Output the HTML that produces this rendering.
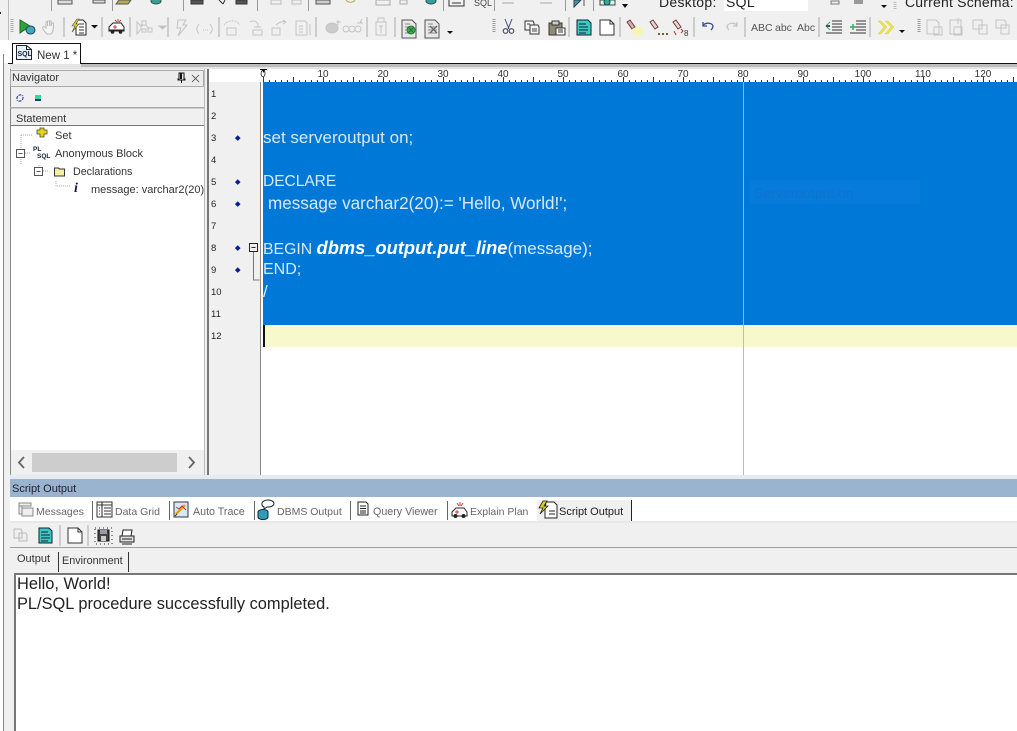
<!DOCTYPE html>
<html><head><meta charset="utf-8"><style>
html,body{margin:0;padding:0}
body{width:1017px;height:731px;position:relative;overflow:hidden;background:#f0f0f0;font-family:"Liberation Sans",sans-serif;color:#222}
.a{position:absolute}
.t{position:absolute;white-space:nowrap;font-size:11px;line-height:14px}
.g{color:#666}
.e{position:absolute;white-space:nowrap;font-size:17px;line-height:22px;color:#d8e9fb;left:263px}
.n{position:absolute;left:211px;font-size:9.500px;line-height:12px;color:#222}
.d{position:absolute;left:235.500px;width:3.500px;height:3.500px;background:#0a1f8f;transform:rotate(45deg)}
.r{position:absolute;top:70px;font-size:10px;line-height:10px;color:#333;transform:translateX(-50%)}
.s{position:absolute;width:1px;background:#999}
svg{position:absolute;overflow:visible}
</style></head><body>
<!-- top toolbars -->
<div class="a" style="left:0;top:0;width:1017px;height:40px;background:#f0f0f0"></div>
<div class="a" style="left:0;top:40px;width:1017px;height:23px;background:#fff"></div>
<div class="a" style="left:8px;top:0;width:1px;height:40px;background:#bbb"></div>
<div class="a" style="left:0;top:12px;width:1px;height:2px;background:#222"></div>
<div class="s" style="left:51px;top:0;height:11px"></div><div class="s" style="left:112px;top:0;height:11px"></div><div class="s" style="left:183px;top:0;height:11px"></div><div class="s" style="left:257px;top:0;height:11px"></div><div class="s" style="left:308px;top:0;height:11px"></div><div class="s" style="left:443px;top:0;height:11px"></div><div class="s" style="left:494px;top:0;height:11px"></div><div class="s" style="left:565px;top:0;height:11px"></div><div class="s" style="left:593px;top:0;height:11px"></div>
<svg style="left:0;top:0" width="1017" height="40" fill="none" stroke-width="1">
<!-- row 1 cropped icons -->
<path d="M58 0h14v4h-14zM93 0h12v3h-12z" stroke="#555" fill="#ddd"/>
<path d="M119 0h12l-3 4h-12z" fill="#b5aa58" stroke="#555"/>
<ellipse cx="156" cy="1" rx="5" ry="3" fill="#3f9c94" stroke="#255"/>
<path d="M191 0h12v4h-12zM219 0l4 4M225 0l-2 4M236 0h11v4h-11z" fill="#555" stroke="#333"/>
<path d="M271 0h10v4h-10zM292 0h9v4h-9z" stroke="#bbb"/>
<path d="M316 0h14v4h-14z" fill="#ccc" stroke="#555"/>
<path d="M346 0a5 4 0 0 0 9 0" stroke="#b8a94a"/><path d="M376 0h14v5h-14zM400 0h7v4h-7z" stroke="#aaa"/>
<ellipse cx="431" cy="1" rx="5" ry="3" fill="#3f9c94" stroke="#255"/>
<path d="M449 0v6h15v-6M452 3h9" stroke="#333"/>
<path d="M502 3h12M540 3h12" stroke="#ccc" stroke-width="2"/>
<path d="M574 0v7l7-7z" fill="#4c9a94" stroke="#245"/><path d="M584 0v6" stroke="#555"/>
<path d="M600 0h15v5h-15z" stroke="#444" fill="#cfe"/><circle cx="607" cy="2" r="3" fill="#3a9" stroke="#244"/>
<path d="M622 4h6l-3 4z" fill="#111"/>
<path d="M831 1h8v3h-8z" stroke="#777"/><path d="M854 0h9v4h-9z" fill="#999"/><path d="M881 5h6l-3 3z" fill="#111"/>
<path d="M895 2v7" stroke="#bbb" stroke-width="3" stroke-dasharray="1 1"/>
<!-- row 2 separators -->
<path d="M12 19v14" stroke="#aaa" stroke-dasharray="1 1" stroke-width="3"/>
<path d="M64 17v20M102 17v20M130 17v20M168 17v20M219 17v20M316 17v20M367 17v20M395 17v20M569 17v20M620 17v20M694 17v20M745 17v20M819 17v20M870 17v20" stroke="#aaa"/>
<path d="M494 19v14M919 19v14" stroke="#999" stroke-width="3" stroke-dasharray="1 1"/>
<!-- run -->
<path d="M20 20v13l10-7z" fill="#31a13c" stroke="#1c6b28"/>
<ellipse cx="30.500" cy="30" rx="4.500" ry="4" fill="#3fa7b5" stroke="#246"/>
<path d="M47 34c-3-3-5-6-4-7s2 0 3 1v-6h1.500v4-5h2v5-5h1.500v5l1-3h1.500c0 4 0 8-2 11z" fill="#f4f4f4" stroke="#bbb"/>
<!-- script -->
<path d="M77 20h6l3 3v12h-10v-7z" fill="#fff" stroke="#222"/><path d="M79 24h5M79 27h5M79 30h5M79 33h5" stroke="#333"/><path d="M77 19l-5 7h3l-3 6 7-8h-3l3-5z" fill="#d9d023" stroke="#555" stroke-width=".6"/>
<path d="M91 25h7l-3.500 3.500z" fill="#111"/>
<!-- ambulance -->
<path d="M109 27l4-4h8l3 4v4h-15z" fill="#fff" stroke="#222"/><path d="M109 30h15" stroke="#222"/><circle cx="112.500" cy="32" r="1.800" fill="#222"/><circle cx="120.500" cy="32" r="1.800" fill="#222"/><path d="M118 19v3M115 20l2 2M121 20l-2 2" stroke="#d34"/><path d="M113 27h4M115 25v4" stroke="#d34"/>
<!-- disabled greys -->
<g stroke="#c4c4c4" fill="#f0f0f0">
<path d="M137 22v12l4-5v-3zM142 21h4v4h-4zM148 28h4v4h-4zM142 32h4v-3h-4zM141 25l2 1M146 25l3 4"/>
<path d="M159 26h7l-3.500 3z" fill="#bbb"/>
<path d="M178 20h8l-3 5h4l-9 11 3-8h-4z"/>
<path d="M199 24c-3 4-3 6 0 10M210 24c3 4 3 6 0 10" fill="none"/><path d="M203 30h1M205 30h1M207 30h1"/>
<path d="M227 28h9v7h-9z" fill="none"/><path d="M224 25c3-5 12-6 16 0" fill="none" stroke-dasharray="2 1"/>
<path d="M250 22c3-2 6-1 8 2v3M253 30h9v5h-9zM254 27h7" fill="none"/>
<path d="M272 28h8v7h-8zM276 25c3-3 7-4 10-3M283 20l3 2-3 2" fill="none"/>
<path d="M296 21h9l2 2v12h-11zM299 26h4M299 29h4M299 32h4M310 24v11" fill="#f0f0f0"/>
<ellipse cx="332" cy="28" rx="6" ry="5" fill="#ccc"/><path d="M338 20v5M336 22h5"/>
<circle cx="346" cy="29" r="3" fill="none"/><circle cx="352" cy="29" r="3" fill="none"/><circle cx="358" cy="29" r="3" fill="none"/><path d="M357 23h5l-2-2M362 19l-2 4"/>
<path d="M376 22h10v13h-10zM378 18h6v4h-6zM379 26h4M381 26v7" fill="#f0f0f0"/>
</g>
<!-- doc xml green -->
<path d="M402 20h10l4 4v14h-14z" fill="#e8e8e8" stroke="#555"/><path d="M405 24h5M405 27h9M405 30h9M405 33h9" stroke="#888"/><circle cx="411" cy="30" r="4" fill="#43b648" stroke="#2b7c30"/><path d="M408 27l6 6M414 27l-6 6" stroke="#264"/>
<path d="M425 20h10l4 4v14h-14z" fill="#e8e8e8" stroke="#555"/><path d="M428 24h5M428 27h9M428 30h9M428 33h9" stroke="#888"/><path d="M430 26l7 7M437 26l-7 7" stroke="#666" stroke-width="1.300"/>
<path d="M447 31h6l-3 3z" fill="#111"/>
<!-- cut copy paste -->
<path d="M505 19l4 10M512 19l-4 10" stroke="#444a88" stroke-width="1"/><circle cx="505.500" cy="31" r="2.300" stroke="#445" stroke-width="1.100"/><circle cx="511.500" cy="31" r="2.300" stroke="#445" stroke-width="1.100"/>
<path d="M525 21h8l1 2v7h-9z" fill="#f4f4f4" stroke="#333"/><path d="M530 25h8l1 2v7h-9z" fill="#f4f4f4" stroke="#333"/><path d="M527 24h3M532 29h5M532 31h5" stroke="#444"/>
<path d="M549 23h13v12h-13z" fill="#8f8b70" stroke="#333"/><path d="M552 21h7v4h-7z" fill="#ccc" stroke="#333"/><path d="M556 28h9v7h-9z" fill="#fff" stroke="#333"/><path d="M558 30h5M558 32h5" stroke="#333"/>
<!-- teal doc, blank -->
<path d="M577 20h11l3 3v12h-14z" fill="#3bc9c2" stroke="#123"/><path d="M579 24h7M579 27h9M579 30h9M579 33h7" stroke="#123"/>
<path d="M600 20h10l4 4v11h-14z" fill="#fff" stroke="#333"/><path d="M610 20v4h4" stroke="#333"/>
<!-- highlighters -->
<path d="M627 22l3-2 5 7-3 2z" fill="#c9b5b5" stroke="#7a3535"/><path d="M632 29l6-3 5 2v7h-9z" fill="#f6f5b5"/>
<path d="M650 22l3-2 5 7-3 2z" fill="#e0d8d8" stroke="#7a3535"/><path d="M658 33h2v2h-2zM662 33h2v2h-2zM666 33h2v2h-2z" fill="#6b6320"/>
<path d="M673 22l3-2 5 7-3 2z" fill="#e0d8d8" stroke="#7a3535"/><path d="M674 31l2 4M681 29l2 2-2 2" stroke="#b33"/><text x="684" y="36" font-family="Liberation Sans" font-size="8" fill="#333">8</text>
<!-- undo/redo -->
<path d="M703 25c4-3 9-2 10 1 0 2-1 3-2 4M703 22v4h4" stroke="#3a4a99" stroke-width="1.300"/>
<path d="M737 25c-4-3-8-2-10 1 0 2 1 3 2 4M737 22v4h-4" stroke="#c4c4c4" stroke-width="1.300"/>
<!-- indent -->
<path d="M832 21h10M832 24h10M832 27h10M832 30h10M826 33h16" stroke="#333"/><path d="M830 22l-4 4 4 4" stroke="#3a6"/><path d="M826 26h4" stroke="#357" stroke-width="2"/>
<path d="M856 21h10M856 24h10M856 27h10M856 30h10M850 33h16" stroke="#333"/><path d="M850 27h6M853 24v6" stroke="#3a6" stroke-width="1.500"/>
<!-- chevrons -->
<path d="M878 21l6 6-6 7 3 0 6-7-6-6zM885 21l6 6-6 7 3 0 6-7-6-6z" fill="#eae34a" stroke="#d5cf52" stroke-width=".5"/>
<path d="M899 30h6l-3 3z" fill="#111"/>
<!-- right grey -->
<g stroke="#c4c4c4" fill="#f0f0f0">
<path d="M927 20h9l3 3v11h-12zM934 27h8v8h-8z"/><path d="M950 20h11v14h-11zM954 27h8v8h-8zM958 18v6"/><path d="M973 20h9v9h-9zM979 25h8v9h-8z"/><path d="M996 20h8l2 2v6h-10zM1001 25h8v9h-8z"/>
</g>
</svg>
<div class="t" style="left:659px;top:-6px;font-size:14px;line-height:16px;letter-spacing:.3px">Desktop:</div>
<div class="a" style="left:724px;top:0;width:84px;height:11px;background:#fff"></div>
<div class="t" style="left:726px;top:-6px;font-size:14px;line-height:16px;letter-spacing:.3px">SQL</div>
<div class="t" style="left:905px;top:-6px;font-size:14px;line-height:16px;letter-spacing:.2px">Current Schema:</div>
<div class="t" style="left:474px;top:-3px;font-size:9px;line-height:12px;color:#444">SQL</div>
<div class="t" style="left:751px;top:21px;font-size:10.500px;color:#555">ABC</div>
<div class="t" style="left:775px;top:21px;font-size:10.500px;color:#555">abc</div>
<div class="t" style="left:797px;top:21px;font-size:10.500px;color:#555">Abc</div>
<!-- tab strip -->
<div class="a" style="left:3px;top:54px;width:1px;height:677px;background:#888"></div>
<div class="a" style="left:0;top:54px;width:3px;height:677px;background:#fff"></div>
<div class="a" style="left:4px;top:64px;width:6px;height:667px;background:#f0f0f0"></div>
<div class="a" style="left:12px;top:43px;width:69px;height:21px;background:#fff;border:1px solid #111;border-bottom:none;box-sizing:border-box"></div>
<div class="a" style="left:81px;top:63px;width:936px;height:1px;background:#111"></div>
<div class="a" style="left:8px;top:63px;width:4px;height:1px;background:#111"></div>
<div class="a" style="left:10px;top:64px;width:1007px;height:5px;background:#e4e4e4"></div>
<div class="a" style="left:81px;top:64px;width:936px;height:3px;background:#bdbdbd"></div>
<svg style="left:16px;top:45px" width="17" height="16" fill="none"><path d="M.500.500h10l5 4v10h-15z" fill="#e7f0fa" stroke="#222"/><path d="M10.500.500v4h5" stroke="#222"/></svg>
<div class="t" style="left:17.500px;top:50px;font-size:7px;line-height:9px;font-weight:bold;color:#123">SQL</div>
<div class="t" style="left:37px;top:49px;font-size:11.500px;color:#333">New 1 *</div>
<!-- navigator -->
<div class="a" style="left:10px;top:69px;width:195px;height:406px;background:#f0f0f0;box-sizing:border-box;border:1px solid #bbb;border-left:1px solid #888;border-top:none"></div>
<div class="a" style="left:10px;top:70px;width:194px;height:17px;background:#ececec;box-sizing:border-box;border:1px solid #aaa;border-radius:1px"></div>
<div class="t" style="left:12px;top:71px;font-size:11px;color:#333">Navigator</div>
<svg style="left:176px;top:72px" width="26" height="13" fill="none"><path d="M3 1h5v6h1v1h-7v-1h1zM5.500 8v3" stroke="#111"/><path d="M4 1h2v6h-2z" fill="#111"/><path d="M16 3l7 7M23 3l-7 7" stroke="#444" stroke-width=".8"/></svg>
<svg style="left:15px;top:92px" width="30" height="12" fill="none"><path d="M2 7a3.500 3.500 0 0 1 6-3M8 5a3.500 3.500 0 0 1-6 3" stroke="#2430a8" stroke-width="1.100" stroke-dasharray="3 1"/><path d="M20 3h6v4h-6z" fill="#3bd6a8"/><path d="M20 7h6v2h-6z" fill="#146"/></svg>
<div class="a" style="left:10px;top:107px;width:194px;height:1px;background:#aaa"></div>
<div class="a" style="left:11px;top:108px;width:193px;height:17px;background:#f0f0f0;border-top:1px solid #ccc;box-sizing:border-box"></div>
<div class="a" style="left:11px;top:125px;width:193px;height:325px;background:#fff;border-top:1px solid #777;box-sizing:border-box"></div>
<div class="t" style="left:16px;top:112px;font-size:11px;color:#333">Statement</div>
<svg style="left:14px;top:127px" width="190" height="70" fill="none">
<path d="M7 8v14M7 8h12M7 37v-7M25 38v2M11 26h6M29 44h6M42 54v5h15" stroke="#aaa" stroke-dasharray="1 1"/>
<path d="M23 3h3v-2h4v2h3v4h-3v3h-4v-3h-3z" fill="#e8d718" stroke="#444" stroke-width=".8"/>
<path d="M2.500 22.500h8v8h-8zM4.500 26.500h4" stroke="#555"/>
<path d="M20.500 40.500h8v8h-8zM22.500 44.500h4" stroke="#555"/>
<path d="M40.500 41h4l1 1h5v7h-10z" fill="#f4f09e" stroke="#333"/>
</svg>
<div class="t" style="left:33px;top:146px;font-size:6.500px;line-height:7px;font-weight:bold;color:#123">PL</div>
<div class="t" style="left:37px;top:153px;font-size:6.500px;line-height:7px;font-weight:bold;color:#123">SQL</div>
<div class="t" style="left:55px;top:129px;color:#333">Set</div>
<div class="t" style="left:55px;top:147px;font-size:11px;color:#333">Anonymous Block</div>
<div class="t" style="left:73px;top:165px;font-size:10.700px;color:#333">Declarations</div>
<div class="t" style="left:74px;top:182px;font-size:14px;font-weight:bold;font-style:italic;color:#14145e;font-family:'Liberation Serif',serif">i</div>
<div class="t" style="left:91px;top:183px;width:113px;overflow:hidden;font-size:11px;color:#333">message: varchar2(20)</div>
<div class="a" style="left:11px;top:450px;width:193px;height:25px;background:#f0f0f0"></div>
<div class="a" style="left:32px;top:453px;width:145px;height:19px;background:#cdcdcd"></div>
<svg style="left:16px;top:456px" width="180" height="13" fill="none"><path d="M8 1l-5 5.500 5 5.500" stroke="#666" stroke-width="1.800"/><path d="M173 1l5 5.500-5 5.500" stroke="#666" stroke-width="1.800"/></svg>
<!-- editor -->
<div class="a" style="left:207px;top:69px;width:2px;height:406px;background:#777"></div>
<div class="a" style="left:209px;top:69px;width:808px;height:13px;background:#fff"></div>
<div class="a" style="left:209px;top:82px;width:51px;height:393px;background:#f0f0f0"></div>
<div class="a" style="left:260px;top:82px;width:1px;height:393px;background:#888"></div>
<div class="a" style="left:261px;top:82px;width:756px;height:393px;background:#fff"></div>
<div class="a" style="left:263px;top:82px;width:754px;height:243px;background:#0078d7"></div>
<div class="a" style="left:263px;top:325px;width:754px;height:22px;background:#f7f9cd"></div>
<div class="a" style="left:743px;top:82px;width:1px;height:243px;background:#7dbdf0"></div>
<div class="a" style="left:743px;top:325px;width:1px;height:150px;background:#bbb"></div>
<div class="a" style="left:263px;top:325px;width:2px;height:22px;background:#111"></div>
<div class="a" style="left:750px;top:180px;width:170px;height:24px;background:#067bdb"></div>
<div class="t" style="left:754px;top:186px;font-size:14px;color:#1272c8">Serveroutput on</div>
<!-- ruler -->
<div class="r" style="left:263px">0</div><div class="r" style="left:323px">10</div><div class="r" style="left:383px">20</div><div class="r" style="left:443px">30</div><div class="r" style="left:503px">40</div><div class="r" style="left:563px">50</div><div class="r" style="left:623px">60</div><div class="r" style="left:683px">70</div><div class="r" style="left:743px">80</div><div class="r" style="left:803px">90</div><div class="r" style="left:863px">100</div><div class="r" style="left:923px">110</div><div class="r" style="left:983px">120</div>
<div class="a" style="left:263px;top:80px;width:754px;height:2px;background:repeating-linear-gradient(90deg,#333 0 1px,transparent 1px 6px)"></div>
<div class="a" style="left:263px;top:77px;width:754px;height:5px;background:repeating-linear-gradient(90deg,#333 0 1px,transparent 1px 30px)"></div>
<svg style="left:260px;top:68px" width="7" height="6"><path d="M0 1h7v1h-7zM2 2h3l-1.500 3z" fill="#111"/></svg>
<!-- line numbers -->
<div class="n" style="top:89px">1</div><div class="n" style="top:111px">2</div><div class="n" style="top:133px">3</div><div class="n" style="top:155px">4</div><div class="n" style="top:177px">5</div><div class="n" style="top:199px">6</div><div class="n" style="top:221px">7</div><div class="n" style="top:243px">8</div><div class="n" style="top:265px">9</div><div class="n" style="top:287px">10</div><div class="n" style="top:309px">11</div><div class="n" style="top:331px">12</div>
<div class="d" style="top:136px"></div><div class="d" style="top:180px"></div><div class="d" style="top:202px"></div><div class="d" style="top:246px"></div><div class="d" style="top:268px"></div>
<svg style="left:249px;top:243px" width="16" height="40" fill="none"><path d="M.500.500h8v8h-8zM2.500 4.500h4" stroke="#222"/><path d="M4.500 9v28h6" stroke="#777"/></svg>
<!-- code -->
<div class="e" style="top:127px">set serveroutput on;</div>
<div class="e" style="top:171px;font-size:15.500px">DECLARE</div>
<div class="e" style="top:193px;left:268px;font-size:17.100px">message varchar2(20):= 'Hello, World!';</div>
<div class="e" style="top:237px;font-size:17px"><span style="font-size:15.800px">BEGIN </span><b style="font-style:italic;color:#fff;font-size:18.300px">dbms_output.put_line</b>(message);</div>
<div class="e" style="top:259px;font-size:16px">END;</div>
<div class="e" style="top:281px">/</div>
<!-- bottom panel -->
<div class="a" style="left:10px;top:475px;width:1007px;height:4px;background:#e6ebf0"></div>
<div class="a" style="left:10px;top:479px;width:1007px;height:18px;background:#9ab3cf"></div>
<div class="t" style="left:12px;top:482px;font-size:11px;color:#223">Script Output</div>
<div class="a" style="left:10px;top:497px;width:1007px;height:26px;background:#fff"></div>
<div class="a" style="left:10px;top:521px;width:1007px;height:2px;background:#e8e8e8"></div>
<div class="a" style="left:537px;top:500px;width:95px;height:21px;background:#f0f0f0;border-right:1px solid #222;box-sizing:border-box"></div>
<div class="s" style="left:92px;top:501px;height:19px;background:#666"></div><div class="s" style="left:169px;top:501px;height:19px;background:#666"></div><div class="s" style="left:254px;top:501px;height:19px;background:#666"></div><div class="s" style="left:350px;top:501px;height:19px;background:#666"></div><div class="s" style="left:447px;top:501px;height:19px;background:#666"></div>
<svg style="left:0;top:497px" width="640" height="26" fill="none">
<path d="M19 6h12v3h-12zM19 9h3v8h-3zM22 11h11v8h-11z" fill="#eee" stroke="#888"/>
<path d="M97 5h15v15h-15z" fill="#fff" stroke="#333"/><path d="M97 8h15M102 5v15M100 11h-1M100 14h-1M100 17h-1M104 11h7M104 14h7M104 17h7" stroke="#333" stroke-width="1.100"/>
<path d="M174 5h14v15h-14z" fill="#d8e8f5" stroke="#334"/><path d="M176 17l9-9" stroke="#d9a41e" stroke-width="2.500"/><path d="M176 10l3 2 3-3 4 4" stroke="#c33"/><path d="M175 19l2-2" stroke="#333"/>
<ellipse cx="263" cy="15" rx="5" ry="2.500" fill="#2f9db5" stroke="#123"/><path d="M258 15v5a5 2.500 0 0 0 10 0v-5" fill="#2f9db5" stroke="#123"/><path d="M262 7a6 3.500 0 1 1 5 3l-3 2v-2a6 3.500 0 0 1-2-3z" fill="#fff" stroke="#123"/>
<path d="M358 5h8l2 2v11h-10z" fill="#fff" stroke="#222"/><path d="M360 9h6M360 11.500h6M360 14h6M360 16h6" stroke="#222"/>
<path d="M452 15l4-4h8l3 4v4h-15z" fill="#fff" stroke="#222"/><circle cx="455.500" cy="19" r="2" fill="#222"/><circle cx="463.500" cy="19" r="2" fill="#222"/><path d="M460 5v4M457 6l2 3M463 6l-2 3M455 15h4M457 13v4" stroke="#d33"/>
<path d="M546 5h8l3 3v13h-12v-8z" fill="#fff" stroke="#222"/><path d="M543 4l-4 7h4l-3 6 8-8h-4l3-5z" fill="#d9d023" stroke="#222" stroke-width=".8"/><path d="M549 14h6M549 17h6" stroke="#222"/>
</svg>
<div class="t g" style="left:36px;top:505px;font-size:10.500px">Messages</div>
<div class="t g" style="left:115px;top:505px;font-size:10.500px">Data Grid</div>
<div class="t g" style="left:193px;top:505px;font-size:10.700px">Auto Trace</div>
<div class="t g" style="left:277px;top:505px;font-size:10.500px">DBMS Output</div>
<div class="t g" style="left:373px;top:505px;font-size:10.700px">Query Viewer</div>
<div class="t g" style="left:470px;top:505px;font-size:10.500px">Explain Plan</div>
<div class="t" style="left:559px;top:505px;font-size:11px;color:#222">Script Output</div>
<!-- output toolbar -->
<div class="a" style="left:10px;top:523px;width:1007px;height:25px;background:#f0f0f0;border-bottom:1px solid #a0a0a0;box-sizing:border-box"></div>
<svg style="left:0;top:523px" width="150" height="25" fill="none">
<path d="M14 6h7l1 2v7h-8zM19 10h7l1 2v6h-8z" fill="#eee" stroke="#bbb"/>
<path d="M39 5h10l3 3v12h-13z" fill="#3bc9c2" stroke="#123"/><path d="M41 9h7M41 12h9M41 15h9M41 18h7" stroke="#123"/>
<path d="M60 2v21M88 2v21" stroke="#aaa"/>
<path d="M68 5h10l4 4v11h-14z" fill="#fff" stroke="#333"/><path d="M78 5v4h4" stroke="#333"/>
<path d="M98 7h11v11h-11z" fill="#444" stroke="#111"/><path d="M100 7h7v4h-7z" fill="#99a"/><path d="M101 13h5v5h-5z" fill="#ccc"/><path d="M95 5h17v16h-17z" stroke="#222" stroke-dasharray="1 3"/>
<path d="M120 13h14v6h-14z" fill="#ddd" stroke="#222"/><path d="M123 7h9l-1 6h-9z" fill="#fff" stroke="#222"/><path d="M122 16h10M122 21h10" stroke="#222"/>
</svg>
<!-- sub tabs -->
<div class="a" style="left:10px;top:548px;width:1007px;height:25px;background:#f0f0f0"></div>
<div class="s" style="left:58px;top:552px;height:20px;background:#333"></div>
<div class="s" style="left:128px;top:552px;height:20px;background:#333"></div>
<div class="t" style="left:17px;top:552px;font-size:11px;color:#333">Output</div>
<div class="t" style="left:62px;top:554px;font-size:10.800px;color:#333">Environment</div>
<div class="a" style="left:14px;top:573px;width:1003px;height:158px;background:#fff;border-left:2px solid #777;border-top:2px solid #777;box-sizing:border-box"></div>
<div class="t" style="left:17px;top:575px;font-size:16.400px;line-height:19px;color:#222">Hello, World!</div>
<div class="t" style="left:17px;top:595px;font-size:16.400px;line-height:19px;color:#222">PL/SQL procedure successfully completed.</div>
</body></html>
